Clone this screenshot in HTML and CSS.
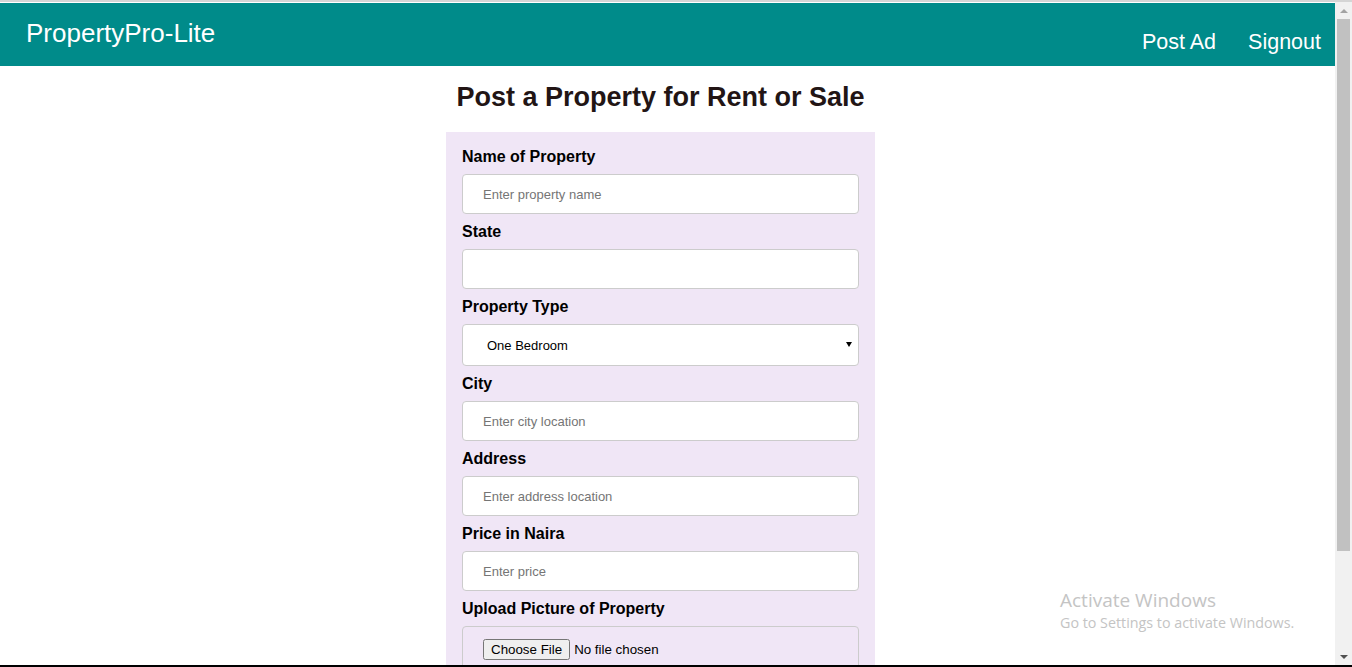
FILE: index.html
```html
<!DOCTYPE html>
<html lang="en">
<head>
<meta charset="utf-8">
<title>PropertyPro-Lite</title>
<link rel="stylesheet" href="styles.css">
</head>
<body>
<div class="topline"></div>
<div class="frame">
  <div class="page">
    <header class="header">
      <div class="logo">PropertyPro-Lite</div>
      <nav class="nav">
        <a class="nav-link" href="#">Post Ad</a>
        <a class="nav-link" href="#">Signout</a>
      </nav>
    </header>
    <main class="main">
      <h1 class="title">Post a Property for Rent or Sale</h1>
      <form class="form">
        <label class="label" for="name">Name of Property</label>
        <input class="field" id="name" type="text" placeholder="Enter property name">

        <label class="label" for="state">State</label>
        <input class="field" id="state" type="text">

        <label class="label" for="type">Property Type</label>
        <div class="select-wrap">
          <select class="field select" id="type">
            <option>One Bedroom</option>
            <option>Two Bedroom</option>
            <option>Duplex</option>
          </select>
          <span class="select-arrow"></span>
        </div>

        <label class="label" for="city">City</label>
        <input class="field" id="city" type="text" placeholder="Enter city location">

        <label class="label" for="address">Address</label>
        <input class="field" id="address" type="text" placeholder="Enter address location">

        <label class="label" for="price">Price in Naira</label>
        <input class="field" id="price" type="text" placeholder="Enter price">

        <label class="label" for="pic">Upload Picture of Property</label>
        <div class="file-box">
          <input class="file" id="pic" type="file">
        </div>
      </form>
    </main>
  </div>
  <div class="scrollbar">
    <div class="sb-btn"><span class="sb-up"></span></div>
    <div class="sb-thumb"></div>
    <div class="sb-track"></div>
    <div class="sb-btn"><span class="sb-down"></span></div>
  </div>
</div>
<div class="bottomline"></div>
<div class="watermark">
  <div class="wm-title">Activate Windows</div>
  <div class="wm-sub">Go to Settings to activate Windows.</div>
</div>
</body>
</html>
```
FILE: styles.css
```css
* { box-sizing: border-box; }

html, body {
  margin: 0;
  padding: 0;
  height: 667px;
  overflow: hidden;
}

body {
  display: flex;
  flex-direction: column;
  font-family: "Liberation Sans", Arial, sans-serif;
  background: #fff;
  color: #000;
}

.topline {
  height: 2px;
  background: #d5d5d5;
  flex: none;
}

.frame {
  flex: 1;
  display: flex;
  min-height: 0;
}

.bottomline {
  height: 2px;
  background: #000;
  flex: none;
}

.page {
  flex: 1;
  min-width: 0;
  overflow: hidden;
  padding-top: 1px;
}

.header {
  height: 63px;
  background: #008b8a;
  display: flex;
  justify-content: space-between;
  align-items: flex-start;
  padding: 0 14px 0 26px;
  color: #fff;
}

.logo {
  font-size: 26px;
  line-height: 30px;
  margin-top: 15px;
}

.nav {
  display: flex;
  gap: 32px;
  margin-top: 27px;
}

.nav-link {
  color: #fff;
  text-decoration: none;
  font-size: 21.5px;
  line-height: 25px;
}

.main {
  display: flex;
  flex-direction: column;
  align-items: center;
  padding-right: 14px;
}

.title {
  margin: 16px 0 19px;
  font-size: 27px;
  line-height: 31px;
  font-weight: bold;
  color: #221515;
}

.form {
  width: 429px;
  background: #f0e6f6;
  padding: 14px 16px 20px;
  display: flex;
  flex-direction: column;
}

.label {
  font-size: 16px;
  line-height: 20px;
  font-weight: bold;
  padding-top: 1px;
  margin-bottom: 7px;
  color: #000;
}

.field {
  width: 397px;
  height: 40px;
  margin: 0 0 7px;
  padding: 0 20px;
  border: 1px solid #ccc;
  border-radius: 4px;
  background: #fff;
  font-family: "Liberation Sans", Arial, sans-serif;
  font-size: 13px;
  color: #000;
  outline: none;
}

.field::placeholder {
  color: #757575;
}

.select-wrap {
  position: relative;
  width: 397px;
  margin-bottom: 7px;
}

.select {
  display: block;
  height: 42px;
  margin: 0;
  padding-left: 24px;
  -webkit-appearance: none;
  appearance: none;
}

.select-arrow {
  position: absolute;
  right: 7px;
  top: 18px;
  width: 0;
  height: 0;
  border-left: 3px solid transparent;
  border-right: 3px solid transparent;
  border-top: 5px solid #000;
}

.file-box {
  width: 397px;
  height: 60px;
  border: 1px solid #ccc;
  border-radius: 4px;
  padding: 12px 20px;
}

.file {
  font-family: "Liberation Sans", Arial, sans-serif;
  font-size: 13.33px;
}

.scrollbar {
  width: 17px;
  flex: none;
  background: #f1f1f1;
  display: flex;
  flex-direction: column;
}

.sb-btn {
  height: 17px;
  display: flex;
  align-items: center;
  justify-content: center;
  flex: none;
}

.sb-up, .sb-down {
  width: 0;
  height: 0;
  border-left: 4px solid transparent;
  border-right: 4px solid transparent;
}

.sb-up { border-bottom: 4px solid #a3a3a3; }
.sb-down { border-top: 4px solid #505050; }

.sb-thumb {
  height: 532px;
  margin: 0 2px;
  background: #c1c1c1;
  flex: none;
}

.sb-track { flex: 1; }

.watermark {
  position: absolute;
  left: 1060px;
  top: 588px;
  font-family: "Open Sans", "Noto Sans", sans-serif;
  color: #c4c4c4;
}

.wm-title {
  font-size: 19px;
  line-height: 24px;
}

.wm-sub {
  font-size: 14.3px;
  line-height: 21px;
}
```
